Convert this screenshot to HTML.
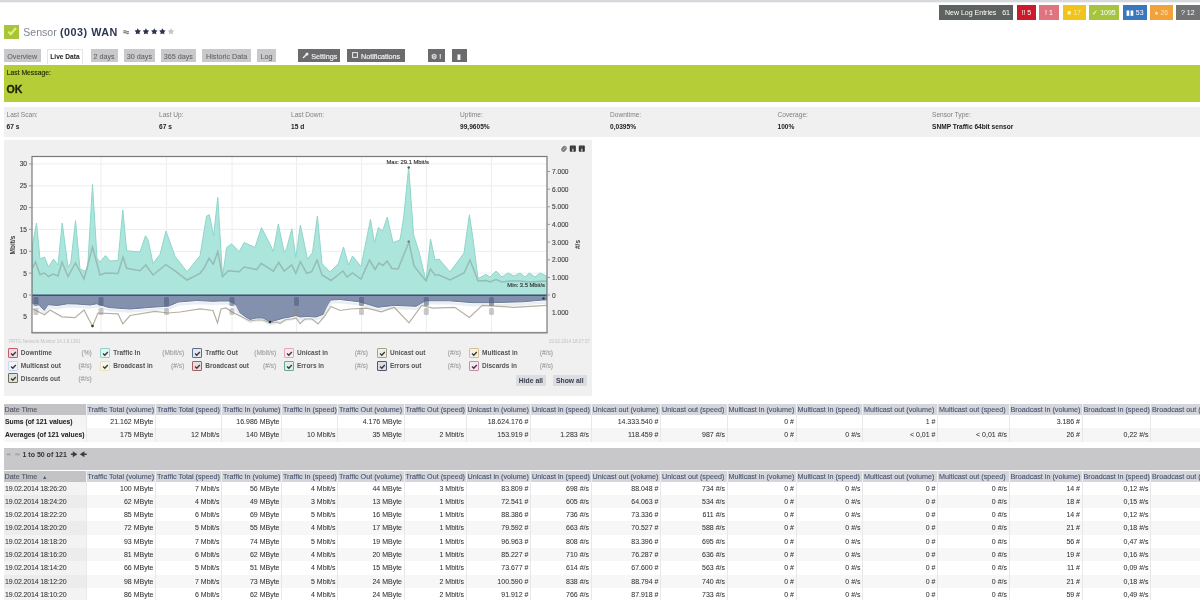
<!DOCTYPE html>
<html><head><meta charset="utf-8">
<style>
*{box-sizing:border-box}
html,body{margin:0;padding:0;width:1200px;height:600px;overflow:hidden;background:#fff;font-family:"Liberation Sans",sans-serif;}
.abs{position:absolute}
#wrap{position:absolute;left:0;top:0;width:1200px;height:600px;overflow:hidden;background:#fff;filter:blur(0.4px)}
#topline{position:absolute;left:0;top:0;width:1200px;height:3px;background:linear-gradient(#d6d8dc,#d6d8dc 1.5px,#fff)}
.badge{position:absolute;top:5px;height:15px;color:#fff;font-size:7px;line-height:16.2px;text-align:center;white-space:nowrap}
#title{position:absolute;left:23px;top:24px;font-size:12.5px;line-height:16px;white-space:nowrap}
#title .s{color:#8c92a0}
#title .n{color:#2c3652;font-weight:bold}
#chk{position:absolute;left:4.4px;top:24.8px;width:14.4px;height:14px;background:#a8c53a}
.tab{position:absolute;top:48.5px;height:13px;background:#c9c9cb;color:#606064;font-size:7.2px;line-height:15.5px;-webkit-text-stroke:0.05px #606064;text-align:center;white-space:nowrap}
.tab.act{background:#fff;color:#222;font-weight:bold;font-size:6.6px;line-height:14.5px;-webkit-text-stroke:0;border:1px solid #e4e4e4;border-bottom:none;height:15px}
.btn{position:absolute;top:48.5px;height:13px;background:#6b6b6d;color:#f4f4f4;font-size:7.2px;line-height:15.5px;-webkit-text-stroke:0.15px #f4f4f4;text-align:center;white-space:nowrap}
#green{position:absolute;left:4px;top:65px;width:1196px;height:37px;background:#b5cd37}
#green .l{position:absolute;left:2.7px;top:4.3px;font-size:6.8px;color:#1f2a05;-webkit-text-stroke:0.15px #1f2a05}
#green .ok{position:absolute;left:2.5px;top:18.3px;font-size:10.6px;line-height:12px;font-weight:bold;color:#1c2408;-webkit-text-stroke:0.3px #1c2408}
#info{position:absolute;left:3.5px;top:106.5px;width:1196.5px;height:30px;background:#f0f0f1}
.il{position:absolute;top:4.8px;font-size:6.6px;color:#808080;white-space:nowrap}
.iv{position:absolute;top:16px;font-size:6.6px;color:#222;font-weight:bold;white-space:nowrap}
#panel{position:absolute;left:4px;top:140px;width:588px;height:256px;background:#f0f0f1}
#chart{position:absolute;left:0;top:0}
.ax{font-size:6.6px;fill:#404040;stroke:#404040;stroke-width:0.12px;font-family:"Liberation Sans",sans-serif}
.ax2{font-size:6.5px;fill:#3a3a3a;font-weight:bold;font-family:"Liberation Sans",sans-serif}
.ax3{font-size:5.8px;fill:#333;stroke:#333;stroke-width:0.15px;font-family:"Liberation Sans",sans-serif}
.foot{font-size:4.5px;fill:#c2c2c2;font-family:"Liberation Sans",sans-serif}
.cb{position:absolute;width:10px;height:10px;border:1.6px solid #888;border-radius:1px;padding:0.2px}
.cb svg{display:block}
.ln{position:absolute;font-size:6.5px;line-height:12px;color:#555;font-weight:bold;white-space:nowrap}
.lu{position:absolute;font-size:6.6px;line-height:12px;color:#a4a4a4;white-space:nowrap;text-align:right;-webkit-text-stroke:0.15px #a4a4a4}
.pb{position:absolute;height:10.5px;top:375.3px;background:#dcdde2;color:#383c48;font-size:6.8px;font-weight:bold;line-height:11px;text-align:center;white-space:nowrap}
table{position:absolute;left:3.5px;width:1226.5px;border-collapse:collapse;table-layout:fixed;font-size:7px;white-space:nowrap}
th{height:9.5px;padding:1px 1px 0 1px;background:#d4d6dc;color:#46516c;font-weight:normal;font-size:7.2px;-webkit-text-stroke:0.1px #46516c;text-align:left;overflow:hidden;border-right:1px solid #eef0f4;line-height:9.5px}
th.h0{background:#c3c3c5;color:#4f5562}
td{padding:0 1.5px;text-align:right;overflow:hidden;border-right:1px solid #e8e8ea;color:#333;-webkit-text-stroke:0.05px #333}
td.c0{text-align:left;padding-left:1.5px}
.t1 td{height:13.5px;line-height:13.5px}
.t1 tr:nth-child(3) td{background:#f6f6f6}
.t1 td.c0{font-weight:bold;color:#222;font-size:6.8px;background:#f4f4f4}
.t2 th{height:10px;line-height:10px}
.t2 td{height:13.3px;line-height:13.3px}
.t2 td.c0{background:#f3f3f3;letter-spacing:-0.15px}
.t2 tr:nth-child(odd) td.c0{background:#ececec}
.t2 tr:nth-child(odd) td{background:#f7f7f7}
.arr{font-size:5px;margin-left:3px}
#pager{position:absolute;left:3.5px;top:448px;width:1196.5px;height:22px;background:#c8c8ca}
#pager .t{position:absolute;left:19px;top:2px;font-size:7px;line-height:9px;font-weight:bold;color:#333;white-space:nowrap}
#pager .g{color:#999}
</style></head><body><div id="wrap">
<div id="topline"></div>
<div class="badge" style="left:939px;width:74px;background:#5d6260;text-align:left;padding-left:6px">New Log Entries <span style="position:absolute;right:3px">61</span></div>
<div class="badge" style="left:1017px;width:19px;background:#cc1a2a">&#8252; 5</div>
<div class="badge" style="left:1039px;width:20px;background:#e0747e">! 1</div>
<div class="badge" style="left:1062.5px;width:23px;background:#f0c41a;color:#fbeeb0">&#9632; 17</div>
<div class="badge" style="left:1089px;width:30px;background:#a6c43e">&#10003; 1095</div>
<div class="badge" style="left:1122.5px;width:24.5px;background:#3a77bf">&#9646;&#9646; 53</div>
<div class="badge" style="left:1150px;width:22.5px;background:#f2a23a;color:#fde0b8">&#9679; 26</div>
<div class="badge" style="left:1175.5px;width:24.5px;background:#717375">? 12</div>

<div id="chk"><svg width="15" height="14" viewBox="0 0 15 14"><path d="M4.4,6.6 L6.7,9.2 L12,3" fill="none" stroke="#def27c" stroke-width="2.1"/></svg></div>
<div class="abs" style="left:23.2px;top:25px;font-size:10.6px;line-height:14px;color:#7f8591;white-space:nowrap">Sensor</div>
<div class="abs" style="left:60px;top:25px;font-size:10.8px;line-height:14px;color:#2c3652;font-weight:bold;letter-spacing:0.5px;white-space:nowrap">(003) WAN</div>
<svg class="abs" style="left:120px;top:26px" width="56" height="12" viewBox="120 26 56 12">
<path d="M123.3,31.2 q1.4,-1 2.8,0 t2.8,0 M123.3,33 q1.4,-1 2.8,0 t2.8,0" fill="none" stroke="#8a8a8a" stroke-width="1.3"/>
<polygon points="137.75,28.20 138.81,30.14 140.98,30.55 139.46,32.16 139.75,34.35 137.75,33.40 135.75,34.35 136.04,32.16 134.52,30.55 136.69,30.14" fill="#2b3150"/><polygon points="145.90,28.20 146.96,30.14 149.13,30.55 147.61,32.16 147.90,34.35 145.90,33.40 143.90,34.35 144.19,32.16 142.67,30.55 144.84,30.14" fill="#2b3150"/><polygon points="154.30,28.20 155.36,30.14 157.53,30.55 156.01,32.16 156.30,34.35 154.30,33.40 152.30,34.35 152.59,32.16 151.07,30.55 153.24,30.14" fill="#2b3150"/><polygon points="162.40,28.20 163.46,30.14 165.63,30.55 164.11,32.16 164.40,34.35 162.40,33.40 160.40,34.35 160.69,32.16 159.17,30.55 161.34,30.14" fill="#2b3150"/><polygon points="171.00,28.20 172.06,30.14 174.23,30.55 172.71,32.16 173.00,34.35 171.00,33.40 169.00,34.35 169.29,32.16 167.77,30.55 169.94,30.14" fill="#c4c4c8"/>
</svg>

<div class="tab" style="left:3.7px;width:37px">Overview</div>
<div class="tab act" style="left:47px;width:36px">Live Data</div>
<div class="tab" style="left:90.5px;width:27px">2 days</div>
<div class="tab" style="left:123.7px;width:31.5px">30 days</div>
<div class="tab" style="left:160.7px;width:35.3px">365 days</div>
<div class="tab" style="left:202px;width:49.3px">Historic Data</div>
<div class="tab" style="left:257px;width:19px">Log</div>
<div class="btn" style="left:298.3px;width:42px;text-align:left;padding-left:13px">Settings<svg class="abs" style="left:4px;top:3px" width="7" height="7" viewBox="0 0 7 7"><path d="M1,6 L4.5,2.5" stroke="#eee" stroke-width="1.4"/><circle cx="5" cy="2" r="1.5" fill="#eee"/></svg></div>
<div class="btn" style="left:347px;width:58px;text-align:left;padding-left:14px">Notifications<svg class="abs" style="left:5px;top:3.5px" width="6" height="6" viewBox="0 0 6 6"><rect x="0.6" y="0.6" width="4.8" height="4.8" fill="none" stroke="#eee" stroke-width="1"/></svg></div>
<div class="btn" style="left:427.5px;width:17.5px">&#9881; !</div>
<div class="btn" style="left:451.7px;width:15.3px">&#9646;</div>

<div id="green"><div class="l">Last Message:</div><div class="ok">OK</div></div>
<div id="info">
<div class="il" style="left:3px">Last Scan:</div><div class="iv" style="left:3px">67 s</div>
<div class="il" style="left:155.5px">Last Up:</div><div class="iv" style="left:155.5px">67 s</div>
<div class="il" style="left:287.5px">Last Down:</div><div class="iv" style="left:287.5px">15 d</div>
<div class="il" style="left:456.5px">Uptime:</div><div class="iv" style="left:456.5px">99,9605%</div>
<div class="il" style="left:606.5px">Downtime:</div><div class="iv" style="left:606.5px">0,0395%</div>
<div class="il" style="left:774px">Coverage:</div><div class="iv" style="left:774px">100%</div>
<div class="il" style="left:928.5px">Sensor Type:</div><div class="iv" style="left:928.5px">SNMP Traffic 64bit sensor</div>
</div>

<div id="panel"></div>
<svg id="chart" width="1200" height="400" viewBox="0 0 1200 400">
<rect x="32" y="157" width="515" height="176" fill="#ffffff"/>
<line x1="32" x2="547" y1="273.1" y2="273.1" stroke="#ededed" stroke-width="1"/>
<line x1="32" x2="547" y1="251.3" y2="251.3" stroke="#ededed" stroke-width="1"/>
<line x1="32" x2="547" y1="229.4" y2="229.4" stroke="#ededed" stroke-width="1"/>
<line x1="32" x2="547" y1="207.6" y2="207.6" stroke="#ededed" stroke-width="1"/>
<line x1="32" x2="547" y1="185.8" y2="185.8" stroke="#ededed" stroke-width="1"/>
<line x1="32" x2="547" y1="163.9" y2="163.9" stroke="#ededed" stroke-width="1"/>
<line x1="101.0" x2="101.0" y1="157" y2="333" stroke="#eeeeee" stroke-width="1"/>
<line x1="166.5" x2="166.5" y1="157" y2="333" stroke="#eeeeee" stroke-width="1"/>
<line x1="232.0" x2="232.0" y1="157" y2="333" stroke="#eeeeee" stroke-width="1"/>
<line x1="296.5" x2="296.5" y1="157" y2="333" stroke="#eeeeee" stroke-width="1"/>
<line x1="361.5" x2="361.5" y1="157" y2="333" stroke="#eeeeee" stroke-width="1"/>
<line x1="426.3" x2="426.3" y1="157" y2="333" stroke="#eeeeee" stroke-width="1"/>
<line x1="491.5" x2="491.5" y1="157" y2="333" stroke="#eeeeee" stroke-width="1"/>
<path d="M32.5,295.0 L32.5,245.0 L36.5,223.0 L40.0,259.0 L44.5,257.0 L48.5,267.0 L53.5,259.0 L58.0,265.0 L62.2,223.0 L68.0,267.0 L70.8,263.0 L75.5,220.6 L80.0,269.0 L84.5,271.0 L87.5,270.0 L92.5,184.5 L97.0,258.0 L100.0,262.0 L105.5,255.5 L110.0,261.0 L118.0,260.5 L122.8,210.0 L126.7,250.8 L140.0,252.0 L145.5,235.8 L148.3,240.4 L153.0,263.3 L160.0,254.4 L166.0,231.0 L175.0,256.2 L187.0,271.7 L200.0,255.8 L206.6,216.0 L209.4,214.8 L213.6,235.8 L217.8,197.3 L222.5,276.7 L226.7,247.5 L231.7,243.8 L239.2,251.7 L244.2,242.5 L255.0,247.5 L261.5,227.6 L270.0,244.2 L273.3,251.7 L278.3,224.0 L284.2,252.5 L286.7,248.3 L291.8,228.8 L295.8,257.5 L300.4,225.0 L307.5,259.2 L312.5,252.5 L317.4,216.0 L322.0,263.7 L330.0,272.0 L338.3,263.7 L343.5,247.0 L348.5,265.0 L352.5,256.0 L361.0,266.5 L370.5,219.4 L374.4,243.0 L378.4,227.6 L382.6,231.0 L387.3,217.0 L393.0,242.5 L400.0,240.0 L403.6,218.0 L408.7,167.0 L413.5,234.6 L419.3,253.0 L426.0,281.0 L430.5,239.0 L435.0,260.0 L439.0,259.0 L450.0,272.0 L464.0,253.0 L469.4,214.8 L473.0,239.0 L478.0,278.5 L486.0,274.5 L490.0,277.0 L496.0,271.0 L502.0,277.0 L508.0,273.0 L514.0,276.0 L520.0,273.0 L525.0,277.0 L529.3,273.0 L535.0,277.0 L540.0,273.0 L546.5,276.0 L546.5,295.0 Z" fill="#abe5dc" stroke="#8fd6ca" stroke-width="1"/>
<path d="M32.5,268.0 L35.5,262.0 L40.0,274.5 L44.5,273.0 L48.5,276.5 L53.0,274.0 L58.0,276.0 L62.0,262.0 L68.0,276.5 L75.5,263.0 L84.0,279.0 L92.5,247.0 L100.0,275.0 L105.5,273.0 L118.0,273.5 L123.0,257.0 L126.7,268.3 L140.0,270.8 L145.8,265.0 L153.0,275.0 L165.8,264.6 L175.0,270.8 L187.0,280.0 L200.0,273.3 L204.0,268.3 L209.0,258.3 L213.3,264.2 L217.8,251.7 L222.5,276.7 L228.3,270.8 L239.2,271.7 L244.2,267.0 L256.7,269.6 L261.2,263.3 L273.3,271.2 L278.8,262.5 L284.2,271.2 L291.7,265.0 L295.8,273.3 L300.4,261.7 L306.7,273.3 L311.7,271.7 L317.0,260.0 L322.0,275.0 L331.0,280.5 L343.0,271.0 L347.0,277.0 L352.5,273.0 L361.0,279.0 L369.5,260.0 L375.0,269.5 L379.0,263.0 L383.0,265.5 L387.0,261.0 L392.0,268.5 L398.0,269.0 L409.0,242.0 L414.0,266.0 L426.0,281.0 L430.5,269.0 L435.0,275.0 L439.0,275.0 L450.0,280.0 L464.0,273.0 L470.0,260.0 L478.0,281.0 L486.0,280.5 L490.0,282.0 L496.0,279.5 L502.0,282.0 L510.0,281.0 L520.0,281.0 L530.0,282.0 L546.5,281.0" fill="none" stroke="#97bcb6" stroke-width="1.5"/>
<path d="M32.5,295.0 L32.5,303.8 L37.5,303.8 L44.6,310.5 L48.3,304.7 L57.5,305.5 L67.5,303.8 L76.7,304.0 L90.0,305.0 L96.7,303.8 L109.0,307.6 L130.0,309.0 L155.0,307.0 L168.3,306.3 L178.3,302.0 L196.7,300.5 L213.0,301.3 L220.0,301.0 L229.0,301.0 L235.0,304.0 L239.0,312.0 L245.0,316.5 L250.0,319.5 L256.0,318.0 L263.0,318.0 L270.0,322.0 L277.0,320.0 L284.0,318.0 L290.0,317.0 L296.0,315.5 L300.0,317.0 L307.0,316.5 L316.0,317.0 L324.0,314.0 L328.0,305.0 L331.0,300.0 L340.0,299.5 L359.4,301.8 L377.7,307.3 L394.2,305.4 L416.2,306.3 L425.4,300.8 L449.3,300.8 L473.0,302.7 L491.5,302.7 L522.7,301.8 L542.8,300.0 L546.5,300.0 L546.5,295.0 Z" fill="#8391ae" stroke="#6a7a9a" stroke-width="1"/>
<path d="M32.5,303.8 L37.5,303.8 L44.6,310.5 L48.3,304.7 L57.5,305.5 L67.5,303.8 L76.7,304.0 L90.0,305.0 L96.7,303.8 L109.0,307.6 L130.0,309.0 L155.0,307.0 L168.3,306.3 L178.3,302.0 L196.7,300.5 L213.0,301.3 L220.0,301.0 L229.0,301.0 L235.0,304.0 L239.0,312.0 L245.0,316.5 L250.0,319.5 L256.0,318.0 L263.0,318.0 L270.0,322.0 L277.0,320.0 L284.0,318.0 L290.0,317.0 L296.0,315.5 L300.0,317.0 L307.0,316.5 L316.0,317.0 L324.0,314.0 L328.0,305.0 L331.0,300.0 L340.0,299.5 L359.4,301.8 L377.7,307.3 L394.2,305.4 L416.2,306.3 L425.4,300.8 L449.3,300.8 L473.0,302.7 L491.5,302.7 L522.7,301.8 L542.8,300.0 L546.5,300.0" fill="none" stroke="#e9eef3" stroke-width="2.5" transform="translate(0,2.5)"/>
<path d="M32.5,308.8 L44.6,314.7 L50.0,310.0 L62.0,316.8 L75.0,317.6 L84.0,310.0 L92.5,326.3 L98.0,313.0 L118.0,313.8 L122.8,323.8 L130.0,315.5 L155.0,311.3 L168.0,313.0 L180.0,312.0 L200.0,308.8 L213.0,310.5 L217.5,323.0 L221.0,309.0 L226.0,308.0 L232.0,312.0 L240.0,316.0 L250.0,321.0 L256.0,320.0 L263.0,320.0 L270.0,323.0 L277.0,322.0 L280.0,323.5 L286.0,319.5 L292.0,319.0 L296.0,318.0 L300.0,323.5 L305.0,319.0 L312.0,319.0 L318.0,324.0 L324.0,317.0 L331.0,306.5 L340.0,310.5 L350.2,309.0 L366.7,308.2 L381.4,311.8 L394.2,307.3 L409.0,322.9 L421.7,305.4 L432.8,308.2 L454.8,307.3 L469.4,317.4 L482.3,305.4 L513.5,307.3 L546.5,305.4" fill="none" stroke="#b5b0a0" stroke-width="1.2"/>
<line x1="32" x2="547" y1="295.3" y2="295.3" stroke="#3d555d" stroke-width="1.3"/>
<rect x="33.5" y="297" width="5" height="9" rx="1.5" fill="#4a5878" opacity="0.55"/>
<rect x="33.5" y="308" width="5" height="7" rx="1.5" fill="#8a8a8a" opacity="0.45"/>
<rect x="98.5" y="297" width="5" height="9" rx="1.5" fill="#4a5878" opacity="0.55"/>
<rect x="98.5" y="308" width="5" height="7" rx="1.5" fill="#8a8a8a" opacity="0.45"/>
<rect x="164.0" y="297" width="5" height="9" rx="1.5" fill="#4a5878" opacity="0.55"/>
<rect x="164.0" y="308" width="5" height="7" rx="1.5" fill="#8a8a8a" opacity="0.45"/>
<rect x="229.5" y="297" width="5" height="9" rx="1.5" fill="#4a5878" opacity="0.55"/>
<rect x="229.5" y="308" width="5" height="7" rx="1.5" fill="#8a8a8a" opacity="0.45"/>
<rect x="294.0" y="297" width="5" height="9" rx="1.5" fill="#4a5878" opacity="0.55"/>
<rect x="294.0" y="308" width="5" height="7" rx="1.5" fill="#8a8a8a" opacity="0.45"/>
<rect x="359.0" y="297" width="5" height="9" rx="1.5" fill="#4a5878" opacity="0.55"/>
<rect x="359.0" y="308" width="5" height="7" rx="1.5" fill="#8a8a8a" opacity="0.45"/>
<rect x="423.8" y="297" width="5" height="9" rx="1.5" fill="#4a5878" opacity="0.55"/>
<rect x="423.8" y="308" width="5" height="7" rx="1.5" fill="#8a8a8a" opacity="0.45"/>
<rect x="489.0" y="297" width="5" height="9" rx="1.5" fill="#4a5878" opacity="0.55"/>
<rect x="489.0" y="308" width="5" height="7" rx="1.5" fill="#8a8a8a" opacity="0.45"/>
<circle cx="92.5" cy="326" r="1.3" fill="#333"/>
<circle cx="270" cy="322" r="1.3" fill="#333"/>
<circle cx="408.7" cy="167.5" r="1.2" fill="#555"/>
<circle cx="543.5" cy="298.5" r="1.3" fill="#2a3550"/>
<circle cx="408.7" cy="241.6" r="1.2" fill="#777"/>
<rect x="32" y="156.5" width="515" height="176" fill="none" stroke="#7a7a7a" stroke-width="1.2"/><line x1="31.5" x2="547.5" y1="332.8" y2="332.8" stroke="#8a8a8a" stroke-width="1.6"/>
<text x="27" y="166.4" text-anchor="end" class="ax">30</text>
<line x1="29" x2="32" y1="163.9" y2="163.9" stroke="#999"/>
<text x="27" y="188.2" text-anchor="end" class="ax">25</text>
<line x1="29" x2="32" y1="185.8" y2="185.8" stroke="#999"/>
<text x="27" y="210.1" text-anchor="end" class="ax">20</text>
<line x1="29" x2="32" y1="207.6" y2="207.6" stroke="#999"/>
<text x="27" y="231.9" text-anchor="end" class="ax">15</text>
<line x1="29" x2="32" y1="229.4" y2="229.4" stroke="#999"/>
<text x="27" y="253.8" text-anchor="end" class="ax">10</text>
<line x1="29" x2="32" y1="251.3" y2="251.3" stroke="#999"/>
<text x="27" y="275.6" text-anchor="end" class="ax">5</text>
<line x1="29" x2="32" y1="273.1" y2="273.1" stroke="#999"/>
<text x="27" y="297.5" text-anchor="end" class="ax">0</text>
<line x1="29" x2="32" y1="295.0" y2="295.0" stroke="#999"/>
<text x="27" y="319.2" text-anchor="end" class="ax">5</text>
<text x="552" y="174.0" class="ax">7.000</text>
<line x1="547" x2="550" y1="171.5" y2="171.5" stroke="#999"/>
<text x="552" y="191.7" class="ax">6.000</text>
<line x1="547" x2="550" y1="189.2" y2="189.2" stroke="#999"/>
<text x="552" y="209.3" class="ax">5.000</text>
<line x1="547" x2="550" y1="206.8" y2="206.8" stroke="#999"/>
<text x="552" y="226.9" class="ax">4.000</text>
<line x1="547" x2="550" y1="224.4" y2="224.4" stroke="#999"/>
<text x="552" y="244.6" class="ax">3.000</text>
<line x1="547" x2="550" y1="242.1" y2="242.1" stroke="#999"/>
<text x="552" y="262.2" class="ax">2.000</text>
<line x1="547" x2="550" y1="259.8" y2="259.8" stroke="#999"/>
<text x="552" y="279.9" class="ax">1.000</text>
<line x1="547" x2="550" y1="277.4" y2="277.4" stroke="#999"/>
<text x="552" y="297.5" class="ax">0</text>
<line x1="547" x2="550" y1="295.0" y2="295.0" stroke="#999"/>
<text x="552" y="315.1" class="ax">1.000</text>
<text transform="translate(15,245) rotate(-90)" text-anchor="middle" class="ax2">Mbit/s</text>
<text transform="translate(580,244.5) rotate(-90)" text-anchor="middle" class="ax2">#/s</text>
<text x="407.7" y="164.3" text-anchor="middle" class="ax3">Max: 29.1 Mbit/s</text>
<text x="545" y="286.5" text-anchor="end" class="ax3">Min: 3.5 Mbit/s</text>
<text x="9" y="342.5" class="foot">PRTG Network Monitor 14.1.8.1361</text>
<text x="590" y="342.5" text-anchor="end" class="foot">19.02.2014 18:27:37</text>
<g><ellipse cx="564" cy="148.8" rx="2.4" ry="3.2" transform="rotate(35 564 148.8)" fill="#7a7a7a"/><path d="M563,150.5 L565.5,147" stroke="#cfcfcf" stroke-width="0.7"/>
<rect x="569.8" y="145.6" width="6" height="6.2" rx="0.8" fill="#2f2f2f"/><rect x="571.8" y="148.6" width="2" height="3.2" fill="#aaa"/><rect x="570.8" y="146.3" width="3.5" height="1.2" fill="#555"/>
<rect x="578.8" y="145.6" width="6" height="6.2" rx="0.8" fill="#2f2f2f"/><rect x="580.8" y="148.6" width="2" height="3.2" fill="#aaa"/><rect x="579.8" y="146.3" width="3.5" height="1.2" fill="#555"/></g>
</svg>
<div class="cb" style="left:7.5px;top:347.7px;border-color:#c55a72;background:#f4d9df"><svg width="8" height="8" viewBox="0 0 8 8"><path d="M2,4.6 L3.8,6.2 L6.8,3" fill="none" stroke="#3a3a40" stroke-width="1.4"/></svg></div>
<div class="ln" style="left:20.8px;top:347.4px">Downtime</div>
<div class="lu" style="left:61.8px;top:347.4px;width:30px">(%)</div>
<div class="cb" style="left:100.0px;top:347.7px;border-color:#8fd3c8;background:#e4f6f3"><svg width="8" height="8" viewBox="0 0 8 8"><path d="M2,4.6 L3.8,6.2 L6.8,3" fill="none" stroke="#3a3a40" stroke-width="1.4"/></svg></div>
<div class="ln" style="left:113.3px;top:347.4px">Traffic In</div>
<div class="lu" style="left:154.3px;top:347.4px;width:30px">(Mbit/s)</div>
<div class="cb" style="left:192.0px;top:347.7px;border-color:#5d6d8e;background:#e4e7ee"><svg width="8" height="8" viewBox="0 0 8 8"><path d="M2,4.6 L3.8,6.2 L6.8,3" fill="none" stroke="#3a3a40" stroke-width="1.4"/></svg></div>
<div class="ln" style="left:205.3px;top:347.4px">Traffic Out</div>
<div class="lu" style="left:246.3px;top:347.4px;width:30px">(Mbit/s)</div>
<div class="cb" style="left:283.7px;top:347.7px;border-color:#e3a6bd;background:#f9e9ef"><svg width="8" height="8" viewBox="0 0 8 8"><path d="M2,4.6 L3.8,6.2 L6.8,3" fill="none" stroke="#3a3a40" stroke-width="1.4"/></svg></div>
<div class="ln" style="left:297.0px;top:347.4px">Unicast in</div>
<div class="lu" style="left:338.0px;top:347.4px;width:30px">(#/s)</div>
<div class="cb" style="left:376.7px;top:347.7px;border-color:#a6a38a;background:#eeede7"><svg width="8" height="8" viewBox="0 0 8 8"><path d="M2,4.6 L3.8,6.2 L6.8,3" fill="none" stroke="#3a3a40" stroke-width="1.4"/></svg></div>
<div class="ln" style="left:390.0px;top:347.4px">Unicast out</div>
<div class="lu" style="left:431.0px;top:347.4px;width:30px">(#/s)</div>
<div class="cb" style="left:468.7px;top:347.7px;border-color:#d8be8e;background:#f7f0e3"><svg width="8" height="8" viewBox="0 0 8 8"><path d="M2,4.6 L3.8,6.2 L6.8,3" fill="none" stroke="#3a3a40" stroke-width="1.4"/></svg></div>
<div class="ln" style="left:482.0px;top:347.4px">Multicast in</div>
<div class="lu" style="left:523.0px;top:347.4px;width:30px">(#/s)</div>
<div class="cb" style="left:7.5px;top:360.5px;border-color:#c9d9f1;background:#f1f5fb"><svg width="8" height="8" viewBox="0 0 8 8"><path d="M2,4.6 L3.8,6.2 L6.8,3" fill="none" stroke="#3a3a40" stroke-width="1.4"/></svg></div>
<div class="ln" style="left:20.8px;top:360.2px">Multicast out</div>
<div class="lu" style="left:61.8px;top:360.2px;width:30px">(#/s)</div>
<div class="cb" style="left:100.0px;top:360.5px;border-color:#e9e2b6;background:#f9f7ec"><svg width="8" height="8" viewBox="0 0 8 8"><path d="M2,4.6 L3.8,6.2 L6.8,3" fill="none" stroke="#3a3a40" stroke-width="1.4"/></svg></div>
<div class="ln" style="left:113.3px;top:360.2px">Broadcast in</div>
<div class="lu" style="left:154.3px;top:360.2px;width:30px">(#/s)</div>
<div class="cb" style="left:192.0px;top:360.5px;border-color:#a45e62;background:#ecdcdd"><svg width="8" height="8" viewBox="0 0 8 8"><path d="M2,4.6 L3.8,6.2 L6.8,3" fill="none" stroke="#3a3a40" stroke-width="1.4"/></svg></div>
<div class="ln" style="left:205.3px;top:360.2px">Broadcast out</div>
<div class="lu" style="left:246.3px;top:360.2px;width:30px">(#/s)</div>
<div class="cb" style="left:283.7px;top:360.5px;border-color:#6fa59d;background:#dfedeb"><svg width="8" height="8" viewBox="0 0 8 8"><path d="M2,4.6 L3.8,6.2 L6.8,3" fill="none" stroke="#3a3a40" stroke-width="1.4"/></svg></div>
<div class="ln" style="left:297.0px;top:360.2px">Errors in</div>
<div class="lu" style="left:338.0px;top:360.2px;width:30px">(#/s)</div>
<div class="cb" style="left:376.7px;top:360.5px;border-color:#4f566e;background:#dbdde3"><svg width="8" height="8" viewBox="0 0 8 8"><path d="M2,4.6 L3.8,6.2 L6.8,3" fill="none" stroke="#3a3a40" stroke-width="1.4"/></svg></div>
<div class="ln" style="left:390.0px;top:360.2px">Errors out</div>
<div class="lu" style="left:431.0px;top:360.2px;width:30px">(#/s)</div>
<div class="cb" style="left:468.7px;top:360.5px;border-color:#c58da8;background:#f4e9ee"><svg width="8" height="8" viewBox="0 0 8 8"><path d="M2,4.6 L3.8,6.2 L6.8,3" fill="none" stroke="#3a3a40" stroke-width="1.4"/></svg></div>
<div class="ln" style="left:482.0px;top:360.2px">Discards in</div>
<div class="lu" style="left:523.0px;top:360.2px;width:30px">(#/s)</div>
<div class="cb" style="left:7.5px;top:373.2px;border-color:#6f6e5e;background:#e2e2dd"><svg width="8" height="8" viewBox="0 0 8 8"><path d="M2,4.6 L3.8,6.2 L6.8,3" fill="none" stroke="#3a3a40" stroke-width="1.4"/></svg></div>
<div class="ln" style="left:20.8px;top:372.9px">Discards out</div>
<div class="lu" style="left:61.8px;top:372.9px;width:30px">(#/s)</div>
<div class="pb" style="left:515.6px;width:30.6px">Hide all</div>
<div class="pb" style="left:553px;width:33.5px">Show all</div>

<table class="t1" style="top:404.0px">
<colgroup><col style="width:82.5px"><col style="width:69.5px"><col style="width:66.0px"><col style="width:60.0px"><col style="width:56.0px"><col style="width:66.5px"><col style="width:62.0px"><col style="width:64.5px"><col style="width:60.5px"><col style="width:69.5px"><col style="width:66.5px"><col style="width:69.0px"><col style="width:66.5px"><col style="width:75.0px"><col style="width:71.5px"><col style="width:73.0px"><col style="width:68.5px"><col style="width:79.5px"></colgroup>
<tr class="hd"><th class="h0">Date Time</th><th>Traffic Total (volume)</th><th>Traffic Total (speed)</th><th>Traffic In (volume)</th><th>Traffic In (speed)</th><th>Traffic Out (volume)</th><th>Traffic Out (speed)</th><th>Unicast in (volume)</th><th>Unicast in (speed)</th><th>Unicast out (volume)</th><th>Unicast out (speed)</th><th>Multicast in (volume)</th><th>Multicast in (speed)</th><th>Multicast out (volume)</th><th>Multicast out (speed)</th><th>Broadcast in (volume)</th><th>Broadcast in (speed)</th><th>Broadcast out (volume)</th></tr>
<tr><td class="c0">Sums (of 121 values)</td><td>21.162 MByte</td><td></td><td>16.986 MByte</td><td></td><td>4.176 MByte</td><td></td><td>18.624.176 #</td><td></td><td>14.333.540 #</td><td></td><td>0 #</td><td></td><td>1 #</td><td></td><td>3.186 #</td><td></td><td></td></tr>
<tr><td class="c0">Averages (of 121 values)</td><td>175 MByte</td><td>12 Mbit/s</td><td>140 MByte</td><td>10 Mbit/s</td><td>35 MByte</td><td>2 Mbit/s</td><td>153.919 #</td><td>1.283 #/s</td><td>118.459 #</td><td>987 #/s</td><td>0 #</td><td>0 #/s</td><td>&lt; 0,01 #</td><td>&lt; 0,01 #/s</td><td>26 #</td><td>0,22 #/s</td><td></td></tr>
</table>
<div id="pager"><svg class="abs" style="left:0;top:0" width="100" height="22" viewBox="3.5 448 100 22">
<path d="M6.3,454.3 h3.7 M14.6,454.3 h4.6" stroke="#a4a4a6" stroke-width="1.8"/>
<path d="M70.4,454.3 h3.2 M73,452.6 l2.6,1.7 l-2.6,1.7 z" stroke="#3c3c3c" stroke-width="1.4" fill="#3c3c3c"/>
<path d="M83,454.3 h3.2 M83.2,452.6 l-2.6,1.7 l2.6,1.7 z" stroke="#3c3c3c" stroke-width="1.4" fill="#3c3c3c"/>
</svg><div class="t">1 to 50 of 121</div></div>
<table class="t2" style="top:470.5px">
<colgroup><col style="width:82.5px"><col style="width:69.5px"><col style="width:66.0px"><col style="width:60.0px"><col style="width:56.0px"><col style="width:66.5px"><col style="width:62.0px"><col style="width:64.5px"><col style="width:60.5px"><col style="width:69.5px"><col style="width:66.5px"><col style="width:69.0px"><col style="width:66.5px"><col style="width:75.0px"><col style="width:71.5px"><col style="width:73.0px"><col style="width:68.5px"><col style="width:79.5px"></colgroup>
<tr class="hd"><th class="h0">Date Time <span class="arr">&#9650;</span></th><th>Traffic Total (volume)</th><th>Traffic Total (speed)</th><th>Traffic In (volume)</th><th>Traffic In (speed)</th><th>Traffic Out (volume)</th><th>Traffic Out (speed)</th><th>Unicast in (volume)</th><th>Unicast in (speed)</th><th>Unicast out (volume)</th><th>Unicast out (speed)</th><th>Multicast in (volume)</th><th>Multicast in (speed)</th><th>Multicast out (volume)</th><th>Multicast out (speed)</th><th>Broadcast in (volume)</th><th>Broadcast in (speed)</th><th>Broadcast out (volume)</th></tr>
<tr><td class="c0">19.02.2014 18:26:20</td><td>100 MByte</td><td>7 Mbit/s</td><td>56 MByte</td><td>4 Mbit/s</td><td>44 MByte</td><td>3 Mbit/s</td><td>83.809 #</td><td>698 #/s</td><td>88.048 #</td><td>734 #/s</td><td>0 #</td><td>0 #/s</td><td>0 #</td><td>0 #/s</td><td>14 #</td><td>0,12 #/s</td><td></td></tr>
<tr><td class="c0">19.02.2014 18:24:20</td><td>62 MByte</td><td>4 Mbit/s</td><td>49 MByte</td><td>3 Mbit/s</td><td>13 MByte</td><td>1 Mbit/s</td><td>72.541 #</td><td>605 #/s</td><td>64.063 #</td><td>534 #/s</td><td>0 #</td><td>0 #/s</td><td>0 #</td><td>0 #/s</td><td>18 #</td><td>0,15 #/s</td><td></td></tr>
<tr><td class="c0">19.02.2014 18:22:20</td><td>85 MByte</td><td>6 Mbit/s</td><td>69 MByte</td><td>5 Mbit/s</td><td>16 MByte</td><td>1 Mbit/s</td><td>88.386 #</td><td>736 #/s</td><td>73.336 #</td><td>611 #/s</td><td>0 #</td><td>0 #/s</td><td>0 #</td><td>0 #/s</td><td>14 #</td><td>0,12 #/s</td><td></td></tr>
<tr><td class="c0">19.02.2014 18:20:20</td><td>72 MByte</td><td>5 Mbit/s</td><td>55 MByte</td><td>4 Mbit/s</td><td>17 MByte</td><td>1 Mbit/s</td><td>79.592 #</td><td>663 #/s</td><td>70.527 #</td><td>588 #/s</td><td>0 #</td><td>0 #/s</td><td>0 #</td><td>0 #/s</td><td>21 #</td><td>0,18 #/s</td><td></td></tr>
<tr><td class="c0">19.02.2014 18:18:20</td><td>93 MByte</td><td>7 Mbit/s</td><td>74 MByte</td><td>5 Mbit/s</td><td>19 MByte</td><td>1 Mbit/s</td><td>96.963 #</td><td>808 #/s</td><td>83.396 #</td><td>695 #/s</td><td>0 #</td><td>0 #/s</td><td>0 #</td><td>0 #/s</td><td>56 #</td><td>0,47 #/s</td><td></td></tr>
<tr><td class="c0">19.02.2014 18:16:20</td><td>81 MByte</td><td>6 Mbit/s</td><td>62 MByte</td><td>4 Mbit/s</td><td>20 MByte</td><td>1 Mbit/s</td><td>85.227 #</td><td>710 #/s</td><td>76.287 #</td><td>636 #/s</td><td>0 #</td><td>0 #/s</td><td>0 #</td><td>0 #/s</td><td>19 #</td><td>0,16 #/s</td><td></td></tr>
<tr><td class="c0">19.02.2014 18:14:20</td><td>66 MByte</td><td>5 Mbit/s</td><td>51 MByte</td><td>4 Mbit/s</td><td>15 MByte</td><td>1 Mbit/s</td><td>73.677 #</td><td>614 #/s</td><td>67.600 #</td><td>563 #/s</td><td>0 #</td><td>0 #/s</td><td>0 #</td><td>0 #/s</td><td>11 #</td><td>0,09 #/s</td><td></td></tr>
<tr><td class="c0">19.02.2014 18:12:20</td><td>98 MByte</td><td>7 Mbit/s</td><td>73 MByte</td><td>5 Mbit/s</td><td>24 MByte</td><td>2 Mbit/s</td><td>100.590 #</td><td>838 #/s</td><td>88.794 #</td><td>740 #/s</td><td>0 #</td><td>0 #/s</td><td>0 #</td><td>0 #/s</td><td>21 #</td><td>0,18 #/s</td><td></td></tr>
<tr><td class="c0">19.02.2014 18:10:20</td><td>86 MByte</td><td>6 Mbit/s</td><td>62 MByte</td><td>4 Mbit/s</td><td>24 MByte</td><td>2 Mbit/s</td><td>91.912 #</td><td>766 #/s</td><td>87.918 #</td><td>733 #/s</td><td>0 #</td><td>0 #/s</td><td>0 #</td><td>0 #/s</td><td>59 #</td><td>0,49 #/s</td><td></td></tr>
</table>
</div></body></html>
